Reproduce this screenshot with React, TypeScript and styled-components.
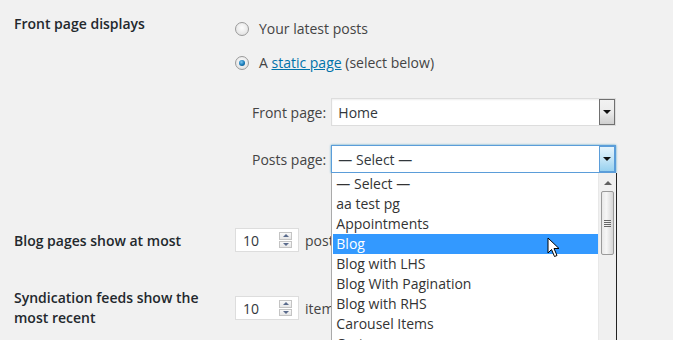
import styled, { createGlobalStyle } from 'styled-components';

const GlobalStyle = createGlobalStyle`
  body {
    margin: 0;
    background: #f1f1f1;
    font-family: 'Open Sans', 'DejaVu Sans', sans-serif;
    font-size: 14px;
    color: #444;
  }
`;

const Page = styled.div`
  width: 673px;
  height: 340px;
  overflow: hidden;
  padding-left: 14px;
  box-sizing: border-box;
`;

const Row = styled.div<{ $top: number }>`
  display: grid;
  grid-template-columns: 221px 1fr;
  padding-top: ${(p) => p.$top}px;
`;

const Label = styled.div<{ $pad: number }>`
  font-weight: 600;
  color: #23282d;
  line-height: 20px;
  padding-top: ${(p) => p.$pad}px;
  width: 195px;
`;

const Field = styled.div<{ $pad: number }>`
  display: flex;
  flex-direction: column;
  padding-top: ${(p) => p.$pad}px;
`;

const RadioLine = styled.label`
  display: flex;
  align-items: center;
  gap: 10px;
  height: 20px;
  line-height: 20px;
  margin-bottom: 14px;
`;

const Radio = styled.span<{ $checked?: boolean }>`
  width: 12px;
  height: 12px;
  border-radius: 50%;
  border: 1px solid #9a9a9a;
  background: radial-gradient(circle at 50% 40%, #fdfdfd 0%, #e6e6e6 70%, #d0d0d0 100%);
  display: flex;
  align-items: center;
  justify-content: center;
  &::after {
    content: '';
    display: ${(p) => (p.$checked ? 'block' : 'none')};
    width: 6px;
    height: 6px;
    border-radius: 50%;
    background: radial-gradient(circle at 40% 35%, #7fc6f0 0%, #1479b8 55%, #0b3f66 100%);
  }
`;

const Link = styled.a`
  color: #0073aa;
  text-decoration: underline;
`;

const PageSelects = styled.div`
  display: grid;
  grid-template-columns: auto 285px;
  justify-content: start;
  column-gap: 5px;
  row-gap: 19px;
  align-items: center;
  margin-left: 17px;
  margin-top: 11px;
`;

const SelectLabel = styled.span`
  color: #444;
`;

const SelectWrap = styled.div`
  position: relative;
`;

const SelectBox = styled.div<{ $focus?: boolean }>`
  height: 28px;
  box-sizing: border-box;
  background: #fff;
  border: 1px solid ${(p) => (p.$focus ? '#5b9dd9' : '#ddd')};
  box-shadow: ${(p) => (p.$focus ? '0 0 2px rgba(30,140,190,.8)' : 'inset 0 1px 2px rgba(0,0,0,.07)')};
  display: flex;
  align-items: center;
  padding-left: 6px;
  color: #32373c;
  position: relative;
`;

const ArrowBtn = styled.span<{ $focus?: boolean }>`
  position: absolute;
  right: 0;
  top: 0;
  bottom: 0;
  width: 16px;
  box-sizing: border-box;
  border: 1px solid ${(p) => (p.$focus ? '#5b9dd9' : '#707070')};
  background: ${(p) =>
    p.$focus
      ? 'linear-gradient(#e5f4fc, #c4e5f6 50%, #98d1ef)'
      : 'linear-gradient(#f2f2f2, #ebebeb 50%, #cfcfcf)'};
  display: flex;
  align-items: center;
  justify-content: center;
  &::after {
    content: '';
    border-left: 4px solid transparent;
    border-right: 4px solid transparent;
    border-top: 4px solid #111;
  }
`;

const DropList = styled.div`
  position: absolute;
  top: 100%;
  left: 0;
  width: 286px;
  height: 175px;
  box-sizing: border-box;
  background: #fff;
  border-left: 1px solid #aaa;
  border-right: 1px solid #222;
  display: flex;
  z-index: 5;
`;

const Options = styled.div`
  flex: 1;
  padding-top: 1px;
  padding-left: 1px;
`;

const Option = styled.div<{ $active?: boolean }>`
  height: 20px;
  line-height: 20px;
  padding-left: 3px;
  color: ${(p) => (p.$active ? '#fff' : '#333')};
  background: ${(p) => (p.$active ? '#3399ff' : 'transparent')};
  position: relative;
  white-space: nowrap;
`;

const Scrollbar = styled.div`
  width: 17px;
  background: #f0f0f0;
  border-left: 1px solid #e8e8e8;
  display: flex;
  flex-direction: column;
  align-items: center;
`;

const ScrollUp = styled.span`
  margin-top: 8px;
  border-left: 4px solid transparent;
  border-right: 4px solid transparent;
  border-bottom: 4px solid #606060;
`;

const Thumb = styled.div`
  margin-top: 6px;
  width: 13px;
  height: 64px;
  box-sizing: border-box;
  border: 1px solid #9a9a9a;
  border-radius: 2px;
  background: linear-gradient(90deg, #e8e8e8, #f6f6f6 40%, #d6d6d6);
  display: flex;
  flex-direction: column;
  align-items: center;
  justify-content: center;
  gap: 1px;
`;

const Grip = styled.span`
  width: 7px;
  height: 1px;
  background: #666;
`;

const Cursor = styled.svg`
  position: absolute;
  left: 214px;
  top: 3px;
`;

const NumberRow = styled.div`
  display: flex;
  align-items: center;
  gap: 6px;
  color: #444;
`;

const NumberBox = styled.div`
  width: 64px;
  height: 24px;
  box-sizing: border-box;
  background: #fff;
  border: 1px solid #ddd;
  display: flex;
  align-items: center;
  justify-content: space-between;
  padding: 0 6px 0 7px;
  color: #32373c;
`;

const Spin = styled.span`
  width: 13px;
  height: 16px;
  display: flex;
  flex-direction: column;
  gap: 1px;
`;

const SpinHalf = styled.span<{ $down?: boolean }>`
  flex: 1;
  border: 1px solid #c4c4c4;
  background: linear-gradient(#f9f9f9, #e6e6e6);
  display: flex;
  align-items: center;
  justify-content: center;
  &::after {
    content: '';
    border-left: 3px solid transparent;
    border-right: 3px solid transparent;
    ${(p) => (p.$down ? 'border-top: 3px solid #5a6b8c;' : 'border-bottom: 3px solid #5a6b8c;')}
  }
`;

const pages = [
  '— Select —',
  'aa test pg',
  'Appointments',
  'Blog',
  'Blog with LHS',
  'Blog With Pagination',
  'Blog with RHS',
  'Carousel Items',
  'Cart',
];

function NumberField({ value, unit }: { value: number; unit: string }) {
  return (
    <NumberRow>
      <NumberBox>
        {value}
        <Spin>
          <SpinHalf />
          <SpinHalf $down />
        </Spin>
      </NumberBox>
      {unit}
    </NumberRow>
  );
}

export default function App() {
  return (
    <>
      <GlobalStyle />
      <Page>
        <Row $top={14}>
          <Label $pad={0}>Front page displays</Label>
          <Field $pad={5}>
            <RadioLine>
              <Radio />
              Your latest posts
            </RadioLine>
            <RadioLine>
              <Radio $checked />
              <span>
                A <Link>static page</Link> (select below)
              </span>
            </RadioLine>
            <PageSelects>
              <SelectLabel>Front page:</SelectLabel>
              <SelectWrap>
                <SelectBox>
                  Home
                  <ArrowBtn />
                </SelectBox>
              </SelectWrap>
              <SelectLabel>Posts page:</SelectLabel>
              <SelectWrap>
                <SelectBox $focus>
                  — Select —
                  <ArrowBtn $focus />
                </SelectBox>
                <DropList>
                  <Options>
                    {pages.map((p) => (
                      <Option key={p} $active={p === 'Blog'}>
                        {p}
                        {p === 'Blog' && (
                          <Cursor width="14" height="21" viewBox="0 0 14 21">
                            <path
                              d="M1 1 L1 16 L4.5 12.5 L7.5 19.5 L10 18.5 L7 11.5 L12 11.5 Z"
                              fill="#fff"
                              stroke="#000"
                              strokeWidth="1"
                              strokeLinejoin="round"
                            />
                          </Cursor>
                        )}
                      </Option>
                    ))}
                  </Options>
                  <Scrollbar>
                    <ScrollUp />
                    <Thumb>
                      <Grip />
                      <Grip />
                      <Grip />
                      <Grip />
                    </Thumb>
                  </Scrollbar>
                </DropList>
              </SelectWrap>
            </PageSelects>
          </Field>
        </Row>
        <Row $top={55}>
          <Label $pad={3}>Blog pages show at most</Label>
          <NumberField value={10} unit="posts" />
        </Row>
        <Row $top={36}>
          <Label $pad={0}>Syndication feeds show the most recent</Label>
          <Field $pad={8}>
            <NumberField value={10} unit="items" />
          </Field>
        </Row>
      </Page>
    </>
  );
}
